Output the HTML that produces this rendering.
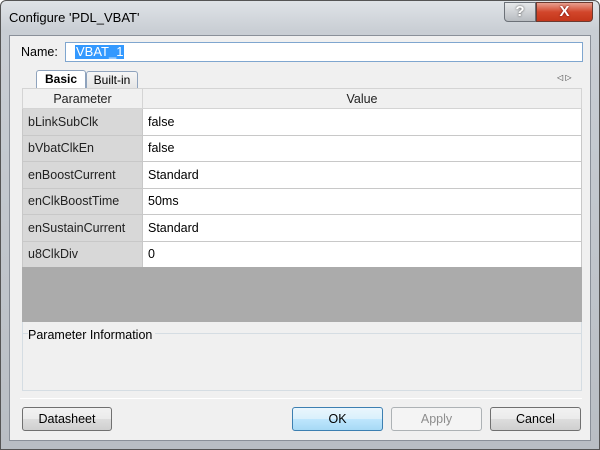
<!DOCTYPE html>
<html><head><style>
*{box-sizing:border-box;margin:0;padding:0}
body{width:600px;height:450px;overflow:hidden;font-family:"Liberation Sans",sans-serif;font-size:12px;color:#000;background:#fff}
.win{position:absolute;left:0;top:0;width:600px;height:450px;background:linear-gradient(180deg,#dfe3e7 0,#c9ced4 30px,#b9bec4 100%);border:1px solid #555;border-radius:6px 6px 0 0}
.title{position:absolute;left:8px;top:9px;font-size:13px;color:#000}
.help{position:absolute;left:503px;top:1px;width:32px;height:20px;background:linear-gradient(#e6e8ea,#b8bcc1);border:1px solid #6c7178;border-radius:0 0 0 4px;color:#fff;font-weight:bold;text-align:center;font-size:15px;line-height:18px;text-shadow:0 0 2px #444}
.close{position:absolute;left:535px;top:1px;width:57px;height:20px;background:linear-gradient(#e8a090,#d2462b 50%,#c4361a);border:1px solid #6c3a30;border-radius:0 0 4px 0;color:#fff;font-weight:bold;text-align:center;font-size:15px;line-height:18px;text-shadow:0 0 2px #600}
.panel{position:absolute;left:9px;top:35px;width:582px;height:406px;background:#f0f0f0;border:1px solid #8a9099}
.abs{position:absolute}
.inp{left:65px;top:42px;width:518px;height:20px;background:#fff;border:1px solid #7fa6cf}
.sel{position:absolute;left:9px;top:2px;background:#3399ff;color:#fff;font-size:13px;line-height:14px;padding:0 1px}
.tab{top:70px;height:19px;font-size:12px;line-height:17px;text-align:center;border:1px solid #8fa3bd;border-bottom:none;border-radius:3px 3px 0 0}
table{position:absolute;left:22px;top:88px;width:560px;border-collapse:collapse;font-size:12.5px}
td{height:26.5px;border:1px solid #c8c8c8;padding-left:5px;background:#fff}
td.p{background:#d8d8d8;width:120px;color:#222}
th{height:20px;font-weight:normal;background:#f0f0f0;border:1px solid #d4d4d4;font-size:12.5px;color:#222}
.btn{top:407px;height:24px;border:1px solid #707070;border-radius:3px;background:linear-gradient(#f2f2f2,#ebebeb 50%,#dddddd 51%,#cfcfcf);text-align:center;line-height:22px;font-size:12.5px}
</style></head><body>
<div class="win">
<div class="title">Configure 'PDL_VBAT'</div>
<div class="help">?</div><div class="close">X</div>
</div>
<div class="panel"></div>
<div class="abs" style="left:21px;top:45px;font-size:12.5px">Name:</div>
<div class="abs inp"><span class="sel">VBAT_1</span></div>
<div class="abs" style="left:22px;top:88px;width:560px;height:1px;background:#8fa3bd"></div>
<div class="abs tab" style="left:36px;width:50px;background:#fff;font-weight:bold;height:20px">Basic</div>
<div class="abs tab" style="left:86px;width:52px;background:linear-gradient(#f6f6f6,#e4e4e4);top:71px">Built-in</div>
<div class="abs" style="left:557px;top:73px;font-size:8px;color:#333">◁ ▷</div>
<table>
<tr><th style="width:120px">Parameter</th><th>Value</th></tr>
<tr><td class="p">bLinkSubClk</td><td>false</td></tr>
<tr><td class="p">bVbatClkEn</td><td>false</td></tr>
<tr><td class="p">enBoostCurrent</td><td>Standard</td></tr>
<tr><td class="p">enClkBoostTime</td><td>50ms</td></tr>
<tr><td class="p">enSustainCurrent</td><td>Standard</td></tr>
<tr><td class="p">u8ClkDiv</td><td>0</td></tr>
</table>
<div class="abs" style="left:22px;top:267px;width:560px;height:55px;background:#ababab"></div>
<div class="abs" style="left:22px;top:322px;width:560px;height:69px;border:1px solid #d5dde3;border-top:none"></div>
<div class="abs" style="left:22px;top:333px;width:560px;height:1px;background:#d5dde3"></div>
<div class="abs" style="left:28px;top:328px;background:#f0f0f0;padding-right:3px;font-size:12.5px">Parameter Information</div>
<div class="abs" style="left:20px;top:398px;width:562px;height:1px;background:#c4c4c4;border-bottom:1px solid #fff"></div>
<div class="abs btn" style="left:22px;width:90px">Datasheet</div>
<div class="abs btn" style="left:292px;width:91px;border-color:#3c7fb1;background:linear-gradient(#eaf6fd,#d9f0fc 50%,#bee6fd 51%,#a7d9f5)">OK</div>
<div class="abs btn" style="left:391px;width:91px;border-color:#adb2b5;background:#f4f4f4;color:#8d8d8d">Apply</div>
<div class="abs btn" style="left:490px;width:91px">Cancel</div>
</body></html>
